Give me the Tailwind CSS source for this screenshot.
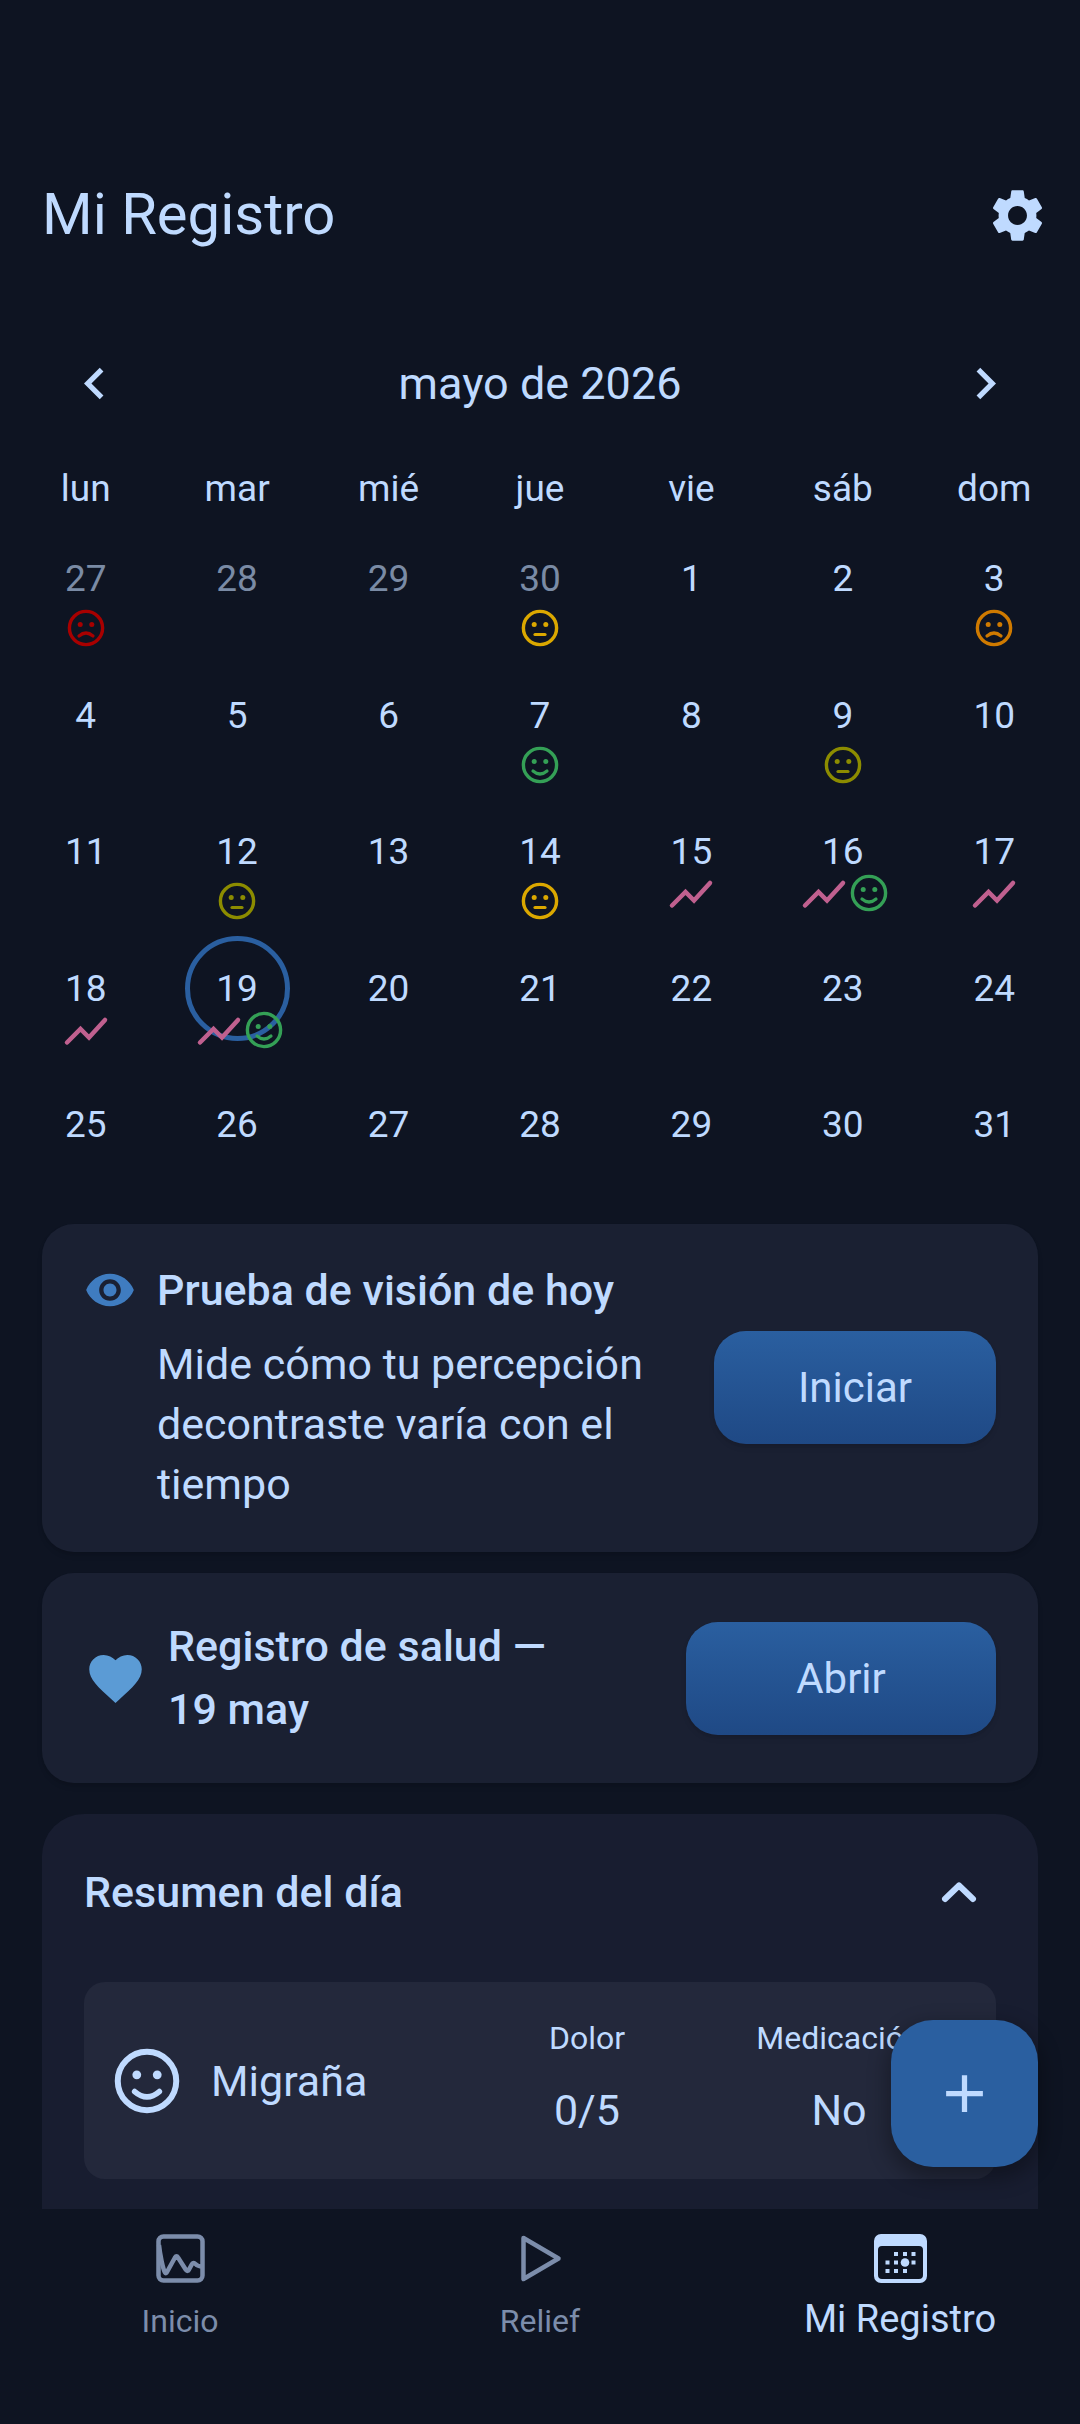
<!DOCTYPE html>
<html lang="es">
<head>
  <meta charset="UTF-8" />
  <meta name="viewport" content="width=device-width, initial-scale=1.0"/>
  <title>Mi Registro</title>
  <script src="https://cdn.jsdelivr.net/npm/@tailwindcss/browser@4"></script>
</head>
<body class="bg-[#0e1422] text-[#bfdaff] font-[Roboto,sans-serif]">

<!-- ICONOS -->
<svg class="hidden">
  <symbol id="face-happy" viewBox="0 0 42 42" fill="none" stroke="currentColor" stroke-linecap="round">
    <circle cx="21" cy="21" r="16.600" stroke-width="3.400"/>
    <circle cx="15.200" cy="17.500" r="2.500" fill="currentColor" stroke="none"/>
    <circle cx="26.800" cy="17.500" r="2.500" fill="currentColor" stroke="none"/>
    <path d="M14 27q7 6 14 0" stroke-width="3.200"/>
  </symbol>
  <symbol id="face-neutral" viewBox="0 0 42 42" fill="none" stroke="currentColor" stroke-linecap="round">
    <circle cx="21" cy="21" r="16.600" stroke-width="3.400"/>
    <circle cx="15.200" cy="17.500" r="2.500" fill="currentColor" stroke="none"/>
    <circle cx="26.800" cy="17.500" r="2.500" fill="currentColor" stroke="none"/>
    <path d="M16 27.500h10" stroke-width="3.200"/>
  </symbol>
  <symbol id="face-sad" viewBox="0 0 42 42" fill="none" stroke="currentColor" stroke-linecap="round">
    <circle cx="21" cy="21" r="16.600" stroke-width="3.400"/>
    <circle cx="15.200" cy="17.500" r="2.500" fill="currentColor" stroke="none"/>
    <circle cx="26.800" cy="17.500" r="2.500" fill="currentColor" stroke="none"/>
    <path d="M14 29q7 -6 14 0" stroke-width="3.200"/>
  </symbol>
  <symbol id="trend" viewBox="0 0 48 42" fill="none" stroke="currentColor" stroke-linecap="round" stroke-linejoin="miter">
    <path d="M5 33.500L18.500 20L27 28.500L43 11" stroke-width="4.500"/>
  </symbol>
</svg>

<div class="h-screen flex flex-col overflow-hidden">

  <!-- HEADER -->
  <header class="flex items-center justify-between pl-[42px] mt-[142px] h-[147px] shrink-0">
    <h1 class="text-[58px] leading-[68px] pb-1">Mi Registro</h1>
    <button aria-label="Ajustes" class="w-[126px] h-[126px] grid place-items-center">
      <svg class="w-[63px] h-[63px]" viewBox="0 0 24 24" fill="currentColor">
        <path d="M19.14 12.94c.04-.3.06-.61.06-.94 0-.32-.02-.64-.07-.94l2.03-1.580c.18-.14.23-.41.12-.61l-1.920-3.320c-.12-.22-.37-.29-.59-.22l-2.390.96c-.5-.38-1.030-.7-1.620-.94l-.36-2.540c-.04-.24-.24-.41-.48-.41h-3.840c-.24 0-.43.17-.47.41l-.36 2.540c-.59.24-1.130.57-1.620.94l-2.390-.96c-.22-.08-.47 0-.59.22L2.740 8.870c-.12.21-.08.47.12.61l2.030 1.580c-.05.3-.09.63-.09.94s.02.64.07.94l-2.030 1.580c-.18.14-.23.41-.12.61l1.920 3.320c.12.22.37.29.59.22l2.390-.96c.5.38 1.030.7 1.620.94l.36 2.540c.05.24.24.41.48.41h3.840c.24 0 .44-.17.47-.41l.36-2.540c.59-.24 1.130-.56 1.620-.94l2.390.96c.22.08.47 0 .59-.22l1.920-3.320c.12-.22.07-.47-.12-.61l-2.010-1.580zM12 15.600c-1.980 0-3.600-1.620-3.600-3.600s1.620-3.600 3.600-3.600 3.600 1.620 3.600 3.600-1.620 3.600-3.600 3.600z"/>
      </svg>
    </button>
  </header>

  <main class="flex-1 min-h-0 overflow-hidden pt-[42px]">

    <!-- Calendario -->
    <section>
      <div class="flex items-center justify-between px-[63px] h-[105px]">
        <button aria-label="Mes anterior">
          <svg class="w-[63px] h-[63px]" viewBox="0 0 24 24" fill="currentColor"><path d="M15.410 7.410L14 6l-6 6 6 6 1.410-1.410L10.830 12z"/></svg>
        </button>
        <h2 class="text-[45px] leading-[52px]">mayo de 2026</h2>
        <button aria-label="Mes siguiente">
          <svg class="w-[63px] h-[63px]" viewBox="0 0 24 24" fill="currentColor"><path d="M8.590 16.590L10 18l6-6-6-6-1.410 1.410L13.170 12z"/></svg>
        </button>
      </div>
      <div class="px-[10px]">
        <table class="w-full table-fixed text-center text-[37px] leading-[44px]">
          <thead>
            <tr class="h-[75px]">
              <th class="font-normal p-0 align-bottom">lun</th>
              <th class="font-normal p-0 align-bottom">mar</th>
              <th class="font-normal p-0 align-bottom">mié</th>
              <th class="font-normal p-0 align-bottom">jue</th>
              <th class="font-normal p-0 align-bottom">vie</th>
              <th class="font-normal p-0 align-bottom">sáb</th>
              <th class="font-normal p-0 align-bottom">dom</th>
            </tr>
          </thead>
          <tbody id="days"></tbody>
        </table>
      </div>
    </section>

    <!-- Tarjetas -->
    <div class="px-[42px] mt-[31px]">
      <section class="flex items-center justify-between bg-[#1a2032] rounded-[32px] px-[42px] pt-[36px] pb-[38px] shadow-md">
        <div class="flex gap-[21px]">
          <svg class="w-[52px] h-[52px] mt-1 shrink-0 text-[#3f7cc0]" viewBox="0 0 24 24" fill="currentColor">
            <path d="M12 4.500C7 4.500 2.730 7.610 1 12c1.730 4.390 6 7.500 11 7.500s9.270-3.110 11-7.500c-1.730-4.390-6-7.500-11-7.500zM12 17c-2.760 0-5-2.240-5-5s2.240-5 5-5 5 2.240 5 5-2.240 5-5 5zm0-8c-1.660 0-3 1.340-3 3s1.340 3 3 3 3-1.340 3-3-1.340-3-3-3z"/>
          </svg>
          <div>
            <h3 class="text-[43px] leading-[60px] font-medium">Prueba de visión de hoy</h3>
            <p class="text-[43px] leading-[60px] mt-[14px]">Mide cómo tu percepción<br>decontraste varía con el<br>tiempo</p>
          </div>
        </div>
        <button class="w-[282px] h-[113px] shrink-0 rounded-[32px] bg-linear-to-b from-[#2a5fa0] to-[#1f4985] text-[42px] shadow-md">Iniciar</button>
      </section>

      <section class="flex items-center justify-between bg-[#1a2032] rounded-[32px] p-[42px] mt-[21px] shadow-md">
        <div class="flex items-center gap-[21px]">
          <svg class="w-[63px] h-[63px] shrink-0 text-[#5b9bd5]" viewBox="0 0 24 24" fill="currentColor">
            <path d="M12 21.350l-1.450-1.320C5.400 15.360 2 12.280 2 8.500 2 5.420 4.420 3 7.500 3c1.740 0 3.410.81 4.500 2.090C13.090 3.810 14.760 3 16.500 3 19.580 3 22 5.420 22 8.500c0 3.780-3.400 6.860-8.550 11.540L12 21.350z"/>
          </svg>
          <h3 class="text-[43px] leading-[63px] font-medium">Registro de salud —<br>19 may</h3>
        </div>
        <button class="w-[310px] h-[113px] shrink-0 rounded-[32px] bg-linear-to-b from-[#2a5fa0] to-[#1f4985] text-[42px] shadow-md">Abrir</button>
      </section>

      <!-- Resumen -->
      <section class="bg-[#181d30] rounded-[42px] px-[42px] pb-[84px] mt-[31px]">
        <div class="flex items-center justify-between h-[168px] pb-[12px]">
          <h3 class="text-[43px] leading-[60px] font-medium">Resumen del día</h3>
          <button aria-label="Contraer resumen" class="w-[74px] h-[74px] grid place-items-center">
            <svg class="w-[42px] h-[42px]" viewBox="0 0 42 42" fill="none" stroke="currentColor" stroke-width="6" stroke-linecap="round" stroke-linejoin="round"><path d="M7 28L21 14.500L35 28"/></svg>
          </button>
        </div>
        <div class="flex items-center bg-[#23283b] rounded-[21px] h-[197px] px-[26px]">
          <svg class="w-[74px] h-[74px] shrink-0"><use href="#face-happy"/></svg>
          <span class="text-[43px] leading-[50px] ml-[27px] flex-1">Migraña</span>
          <dl class="w-[504px] grid grid-cols-2 text-center mr-[5px] pb-[10px]">
            <div>
              <dt class="text-[32px] leading-[42px]">Dolor</dt>
              <dd class="text-[43px] leading-[50px] mt-[26px]">0/5</dd>
            </div>
            <div>
              <dt class="text-[32px] leading-[42px]">Medicación</dt>
              <dd class="text-[43px] leading-[50px] mt-[26px]">No</dd>
            </div>
          </dl>
        </div>
      </section>
    </div>
  </main>

  <!-- Botón flotante -->
  <button aria-label="Añadir registro" class="fixed right-[42px] bottom-[257px] w-[147px] h-[147px] rounded-[42px] bg-[#2a5fa0] shadow-[0_8px_20px_4px_rgba(0,0,0,0.3)] grid place-items-center">
    <svg class="w-[63px] h-[63px]" viewBox="0 0 24 24" fill="currentColor"><path d="M19 13h-6v6h-2v-6H5v-2h6V5h2v6h6v2z"/></svg>
  </button>

  <!-- NAV -->
  <nav class="relative grid grid-cols-3 h-[215px] shrink-0 bg-[#0e1422] pt-[18px] text-center">
    <a href="#inicio" class="flex flex-col items-center text-[#7c8dab]">
      <svg class="w-[63px] h-[63px]" viewBox="0 0 63 63" fill="none" stroke="currentColor" stroke-width="4.500" stroke-linejoin="round">
        <rect x="9.500" y="9.500" width="44" height="44" rx="5"/>
        <path d="M10 18C11 28 14 42 16 45.500Q17 47 18 45L26 30.500Q27.500 28 29 30.500L37 43Q38.500 45 40 42.500L43 37Q44.500 35 46.500 37Q49 39.500 53 39.500"/>
      </svg>
      <span class="text-[32px] leading-[42px] mt-[10px]">Inicio</span>
    </a>
    <a href="#relief" class="flex flex-col items-center text-[#7c8dab]">
      <svg class="w-[63px] h-[63px]" viewBox="0 0 63 63" fill="none" stroke="currentColor" stroke-width="4.500" stroke-linejoin="round">
        <path d="M14.500 11L49.500 31.500L14.500 52z"/>
      </svg>
      <span class="text-[32px] leading-[42px] mt-[10px]">Relief</span>
    </a>
    <a href="#registro" class="flex flex-col items-center" aria-current="page">
      <svg class="w-[63px] h-[63px]" viewBox="0 0 63 63" fill="currentColor">
        <path fill-rule="evenodd" d="M12 7h39a7 7 0 0 1 7 7v35a7 7 0 0 1-7 7H12a7 7 0 0 1-7-7V14a7 7 0 0 1 7-7zM13 19a4 4 0 0 0-4 4v25a4 4 0 0 0 4 4h37a4 4 0 0 0 4-4V23a4 4 0 0 0-4-4z"/>
        <path d="M25 25h4v4h-4zM34 25h4v4h-4zM42.500 25h4v4h-4zM16.500 33.500h4v4h-4zM25 33.500h4v4h-4zM42.500 33.500h4v4h-4zM16.500 42h4v4h-4zM25 42h4v4h-4zM34 42h4v4h-4z"/>
        <circle cx="36" cy="35.500" r="4.300"/>
      </svg>
      <span class="text-[38px] leading-[44px] mt-[7px]">Mi Registro</span>
    </a>
  </nav>
</div>

<script>
  const weeks = [
    [27, 28, 29, 30, 1, 2, 3],
    [4, 5, 6, 7, 8, 9, 10],
    [11, 12, 13, 14, 15, 16, 17],
    [18, 19, 20, 21, 22, 23, 24],
    [25, 26, 27, 28, 29, 30, 31]
  ];
  const today = 19;
  const trends = [15, 16, 17, 18, 19];
  // clave "semana-día"
  const faces = {
    "0-27": ["sad", "text-[#a80000]"],
    "0-30": ["neutral", "text-[#dba800]"],
    "0-3": ["sad", "text-[#cf7a00]"],
    "1-7": ["happy", "text-[#34a056]"],
    "1-9": ["neutral", "text-[#8c8c00]"],
    "2-12": ["neutral", "text-[#8c8c00]"],
    "2-14": ["neutral", "text-[#dba800]"],
    "2-16": ["happy", "text-[#34a056]"],
    "3-19": ["happy", "text-[#34a056]"]
  };

  function dayCell(day, week) {
    const outside = week === 0 && day > 20;
    const face = faces[week + "-" + day];
    const trend = trends.includes(day);
    let marks = "";
    if (trend) marks += '<svg class="w-[48px] h-[42px] text-[#c0608f]"><use href="#trend"/></svg>';
    if (face) marks += '<svg class="w-[42px] h-[42px] ' + face[1] + '"><use href="#face-' + face[0] + '"/></svg>';
    const ring = day === today ? '<span class="absolute w-[105px] h-[105px] rounded-full border-[5px] border-[#2a5fa0]"></span>' : "";
    const place = trend ? (face ? "top-[88px] pl-[5px]" : "top-[88px]") : "top-[96px]";
    return '<td class="p-0"><button class="relative w-full h-[136px] flex items-center justify-center ' + (outside ? "text-[#7a8ba5]" : "") + '">' +
      ring + day + '<span class="absolute inset-x-0 flex justify-center ' + place + '">' + marks + "</span></button></td>";
  }

  document.getElementById("days").innerHTML = weeks
    .map((week, i) => '<tr class="h-[136px] even:h-[137px]">' + week.map(d => dayCell(d, i)).join("") + "</tr>")
    .join("");
</script>

</body>
</html>
